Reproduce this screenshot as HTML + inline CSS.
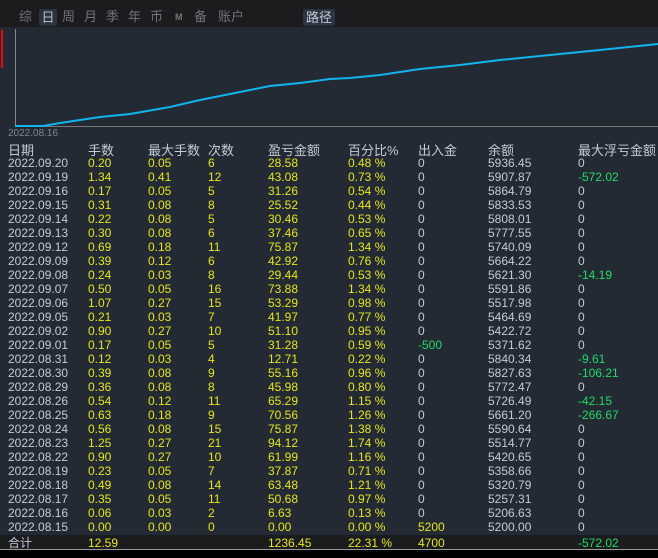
<!DOCTYPE html>
<html><head><meta charset="utf-8"><style>
body{margin:0;width:658px;height:558px;background:#000;overflow:hidden;font-family:"Liberation Sans","Noto Sans CJK SC",sans-serif;position:relative}
#top{position:absolute;left:0;top:0;width:658px;height:27px;background:#1b1c1e}
.tab{position:absolute;top:8px;font-size:13px;color:#6f747a;line-height:18px}
#chart{position:absolute;left:0;top:27px;width:658px;height:523px;background:#232a33}
.r{position:absolute;left:0;width:658px;height:14px;font-size:12px;line-height:14px;color:#c3cbd8}
.r span{position:absolute;top:0}
.y{color:#e6e61a}.g{color:#22d966}
</style></head><body>
<div id="top">
<span class="tab" style="left:19px">综</span>
<span class="tab" style="left:39px;top:9px;width:18px;height:17px;background:#2b3440;border-radius:2px;color:#b5bcc6;text-align:center">日</span>
<span class="tab" style="left:62px">周</span>
<span class="tab" style="left:84px">月</span>
<span class="tab" style="left:106px">季</span>
<span class="tab" style="left:128px">年</span>
<span class="tab" style="left:150px">币</span>
<span class="tab" style="left:175px;font-size:9px;font-weight:bold;color:#777">M</span>
<span class="tab" style="left:194px">备</span>
<span class="tab" style="left:218px">账户</span>
<span class="tab" style="left:303px;top:9px;width:32px;height:17px;background:#2b3440;border-radius:2px;color:#c5ccd6;text-align:center">路径</span>
</div>
<div id="chart"></div>
<div style="position:absolute;left:1px;top:30px;width:2px;height:38px;background:#e01010"></div>
<svg style="position:absolute;left:0;top:0" width="658" height="140">
<line x1="15.5" y1="29" x2="15.5" y2="127" stroke="#888" stroke-width="1"/>
<line x1="15" y1="126.5" x2="658" y2="126.5" stroke="#777" stroke-width="1"/>
<polyline fill="none" stroke="#12b4ee" stroke-width="2" points="15,126 43,126 60,123 100,117 130,114 170,107 200,100 240,92 270,86 300,83 330,79 350,78 380,75 420,69 460,65 500,60 540,56 600,50 658,44"/>
<text x="8" y="136" font-size="10" fill="#7d8590" font-family="Liberation Sans">2022.08.16</text>
</svg>
<div class="r" style="top:143px;height:15px;font-size:13px;line-height:15px">
<span style="left:8px">日期</span><span style="left:88px">手数</span><span style="left:148px">最大手数</span><span style="left:208px">次数</span><span style="left:268px">盈亏金额</span><span style="left:348px">百分比%</span><span style="left:418px">出入金</span><span style="left:488px">余额</span><span style="left:578px">最大浮亏金额</span>
</div>
<div id="rows"></div>
<div style="position:absolute;left:0;top:535px;width:658px;height:14px;background:#1b1c1e"></div>
<div style="position:absolute;left:0;top:549px;width:658px;height:1px;background:#999"></div>
<div class="r" style="top:536px"><span style="left:8px">合计</span><span class="y" style="left:88px">12.59</span><span class="y" style="left:268px">1236.45</span><span class="y" style="left:348px">22.31 %</span><span class="y" style="left:418px">4700</span><span class="g" style="left:578px">-572.02</span></div>
<script>
var d=[["2022.09.20","0.20","0.05","6","28.58","0.48 %","0","5936.45","0"],
["2022.09.19","1.34","0.41","12","43.08","0.73 %","0","5907.87","-572.02"],
["2022.09.16","0.17","0.05","5","31.26","0.54 %","0","5864.79","0"],
["2022.09.15","0.31","0.08","8","25.52","0.44 %","0","5833.53","0"],
["2022.09.14","0.22","0.08","5","30.46","0.53 %","0","5808.01","0"],
["2022.09.13","0.30","0.08","6","37.46","0.65 %","0","5777.55","0"],
["2022.09.12","0.69","0.18","11","75.87","1.34 %","0","5740.09","0"],
["2022.09.09","0.39","0.12","6","42.92","0.76 %","0","5664.22","0"],
["2022.09.08","0.24","0.03","8","29.44","0.53 %","0","5621.30","-14.19"],
["2022.09.07","0.50","0.05","16","73.88","1.34 %","0","5591.86","0"],
["2022.09.06","1.07","0.27","15","53.29","0.98 %","0","5517.98","0"],
["2022.09.05","0.21","0.03","7","41.97","0.77 %","0","5464.69","0"],
["2022.09.02","0.90","0.27","10","51.10","0.95 %","0","5422.72","0"],
["2022.09.01","0.17","0.05","5","31.28","0.59 %","-500","5371.62","0"],
["2022.08.31","0.12","0.03","4","12.71","0.22 %","0","5840.34","-9.61"],
["2022.08.30","0.39","0.08","9","55.16","0.96 %","0","5827.63","-106.21"],
["2022.08.29","0.36","0.08","8","45.98","0.80 %","0","5772.47","0"],
["2022.08.26","0.54","0.12","11","65.29","1.15 %","0","5726.49","-42.15"],
["2022.08.25","0.63","0.18","9","70.56","1.26 %","0","5661.20","-266.67"],
["2022.08.24","0.56","0.08","15","75.87","1.38 %","0","5590.64","0"],
["2022.08.23","1.25","0.27","21","94.12","1.74 %","0","5514.77","0"],
["2022.08.22","0.90","0.27","10","61.99","1.16 %","0","5420.65","0"],
["2022.08.19","0.23","0.05","7","37.87","0.71 %","0","5358.66","0"],
["2022.08.18","0.49","0.08","14","63.48","1.21 %","0","5320.79","0"],
["2022.08.17","0.35","0.05","11","50.68","0.97 %","0","5257.31","0"],
["2022.08.16","0.06","0.03","2","6.63","0.13 %","0","5206.63","0"],
["2022.08.15","0.00","0.00","0","0.00","0.00 %","5200","5200.00","0"]];
var x=[8,88,148,208,268,348,418,488,578],h="";
d.forEach(function(r,i){h+='<div class="r" style="top:'+(156+i*14)+'px">';
r.forEach(function(v,j){var c="";if(j>=1&&j<=5)c="y";if(j==6)c=v=="0"?"":(v[0]=="-"?"g":"y");if(j==8&&v!="0")c="g";
h+='<span class="'+c+'" style="left:'+x[j]+'px">'+v+'</span>';});h+='</div>';});
document.getElementById("rows").innerHTML=h;
</script>
</body></html>
